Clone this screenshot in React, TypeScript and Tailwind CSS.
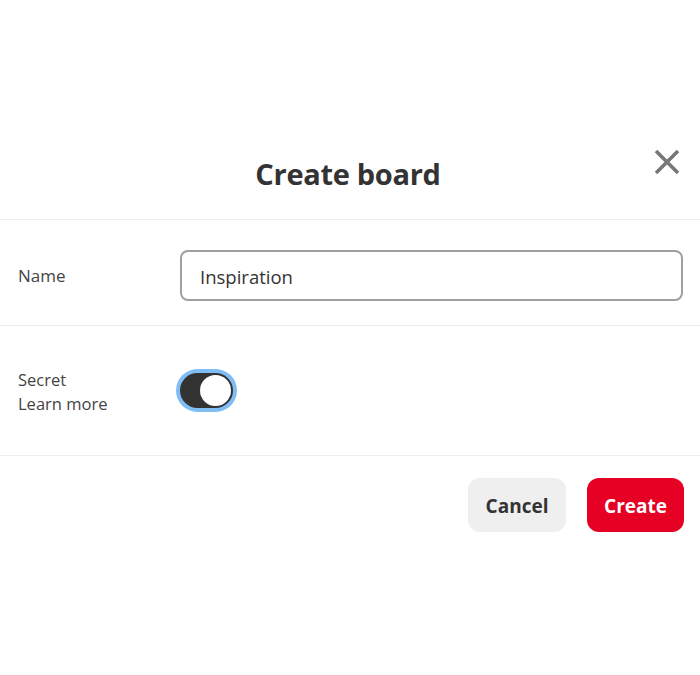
import React from "react";

export default function App() {
  const font = { fontFamily: '"Open Sans", "Noto Sans", "Liberation Sans", sans-serif' };
  return (
    <div className="w-[700px] h-[675px] bg-white text-[#333333]" style={font}>
      <div className="relative pt-[152px] pb-[23px] border-b border-[#ececec] flex justify-center">
        <h1 className="text-[29px] leading-[44px] font-bold text-[#333333] tracking-[-0.3px] pr-[4px]">Create board</h1>
        <button className="absolute right-[18px] top-[147px] w-[30px] h-[30px] flex items-center justify-center">
          <svg width="28" height="28" viewBox="0 0 28 28">
            <path d="M3 3 L25 25 M25 3 L3 25" stroke="#777777" strokeWidth="3.6" strokeLinecap="butt" />
          </svg>
        </button>
      </div>
      <div className="flex items-center pt-[30px] pb-[24px] border-b border-[#ececec]">
        <div className="w-[180px] pl-[18px] text-[17px] text-[#444444] pt-[1px]">Name</div>
        <div className="w-[503px] h-[51px] border-2 border-[#a0a0a0] rounded-[8px] flex items-center pl-[18px] pt-[3px] text-[18.5px] text-[#333333]">
          Inspiration
        </div>
      </div>
      <div className="flex items-center h-[130px] border-b border-[#ececec]">
        <div className="w-[176px] pl-[18px] text-[16.5px] leading-[24px] text-[#444444] pt-[2px]">
          <div>Secret</div>
          <div>Learn more</div>
        </div>
        <div className="w-[61px] h-[43px] rounded-full bg-[#7fbdf5] p-[4px]">
          <div className="w-full h-full rounded-full bg-[#333333] flex items-center justify-end pr-[2px]">
            <div className="w-[31px] h-[31px] rounded-full bg-white"></div>
          </div>
        </div>
      </div>
      <div className="flex justify-end gap-[21px] pt-[22px] pr-[16px]">
        <button className="w-[98px] h-[54px] rounded-[12px] bg-[#efefef] text-[19px] font-bold text-[#333333] pt-[2px]">Cancel</button>
        <button className="w-[97px] h-[54px] rounded-[12px] bg-[#e60023] text-[19px] font-bold text-white pt-[2px]">Create</button>
      </div>
    </div>
  );
}
